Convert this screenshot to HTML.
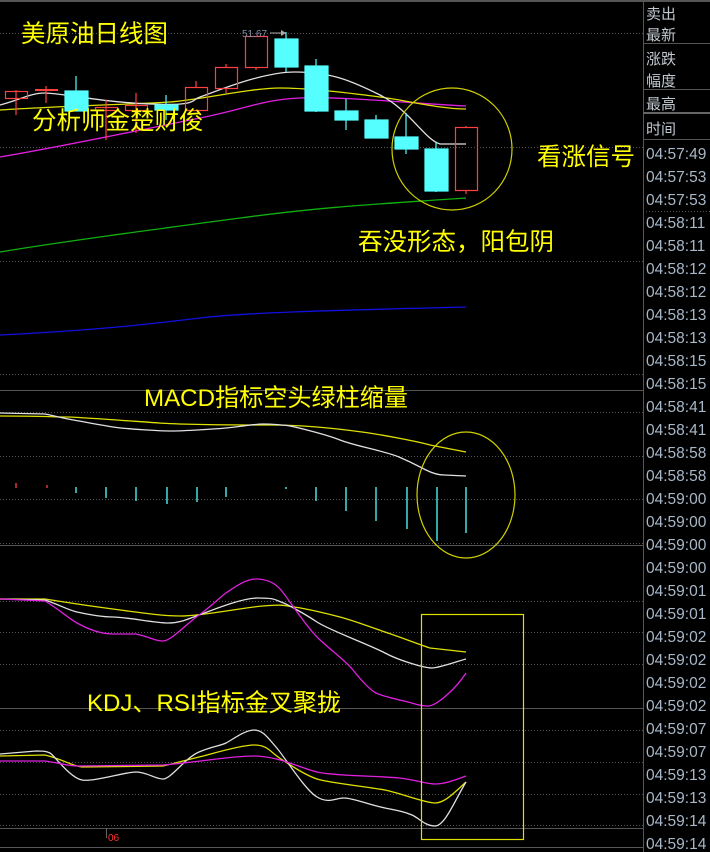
<!DOCTYPE html>
<html><head><meta charset="utf-8"><style>
html,body{margin:0;padding:0;background:#000;width:710px;height:852px;overflow:hidden}
svg{display:block}
.cn{font-family:"Liberation Sans","Noto Sans CJK SC",sans-serif}
</style></head><body>
<svg width="710" height="852" viewBox="0 0 710 852" xmlns="http://www.w3.org/2000/svg">
<rect width="710" height="852" fill="#000"/>
<line x1="0" y1="1" x2="710" y2="1" stroke="#555" stroke-width="2"/>
<g stroke="#555" stroke-width="1" stroke-dasharray="1,2">
<line x1="0" y1="33.5" x2="643" y2="33.5"/>
<line x1="0" y1="147.5" x2="643" y2="147.5"/>
<line x1="0" y1="261.5" x2="643" y2="261.5"/>
<line x1="0" y1="374.5" x2="643" y2="374.5"/>
<line x1="0" y1="412.5" x2="643" y2="412.5"/>
<line x1="0" y1="456.5" x2="643" y2="456.5"/>
<line x1="0" y1="499.5" x2="643" y2="499.5"/>
<line x1="0" y1="543.5" x2="643" y2="543.5"/>
<line x1="0" y1="601.5" x2="643" y2="601.5"/>
<line x1="0" y1="632.5" x2="643" y2="632.5"/>
<line x1="0" y1="664.5" x2="643" y2="664.5"/>
<line x1="0" y1="730.5" x2="643" y2="730.5"/>
<line x1="0" y1="762.5" x2="643" y2="762.5"/>
<line x1="0" y1="794.5" x2="643" y2="794.5"/>
<line x1="0" y1="825.5" x2="643" y2="825.5"/>
<line x1="643" y1="211.5" x2="710" y2="211.5"/>
</g>
<g stroke="#555" stroke-width="1">
<line x1="0" y1="390.5" x2="643" y2="390.5"/>
<line x1="0" y1="545.5" x2="643" y2="545.5"/>
<line x1="0" y1="708.5" x2="643" y2="708.5"/>
<line x1="0" y1="828.5" x2="643" y2="828.5"/>
<line x1="0" y1="847.5" x2="643" y2="847.5"/>
<line x1="643.5" y1="0" x2="643.5" y2="852"/>
<line x1="643" y1="43.5" x2="710" y2="43.5"/>
<line x1="643" y1="89.5" x2="710" y2="89.5"/>
<line x1="643" y1="139.5" x2="710" y2="139.5"/>
</g>
<line x1="643" y1="113" x2="710" y2="113" stroke="#666" stroke-width="2"/>

<g fill="none" stroke-width="1.3">
<path d="M0,335 C100,330 150,324 200,318 S350,310 466,307" stroke="#1010e0"/>
<path d="M0,252 C60,242 150,230 240,218 S380,204 466,198" stroke="#10b010"/>
<path d="M0,157 C60,147 150,128 200,118 S260,100 300,98 S420,104 466,106" stroke="#e020e0"/>
<path d="M0,110 C60,106 140,104 170,102 S250,88 280,88 S350,93 380,97 S440,109 466,109" stroke="#e0e000"/>
<path d="M0,105 C20,100 30,93 45,93 S100,102 150,104 S190,100 200,97 S260,72 295,72 S350,80 380,95 S425,140 440,144 L466,144" stroke="#e0e0e0"/>
</g>

<g stroke="#ff4040" stroke-width="1.2" fill="none">
<line x1="16" y1="90" x2="16" y2="115"/><rect x="5.5" y="91.5" width="22" height="7"/>
<line x1="46" y1="86" x2="46" y2="103"/><line x1="35" y1="90" x2="58" y2="90" stroke-width="2"/>
<line x1="106" y1="100" x2="106" y2="140"/><rect x="95.5" y="107.5" width="22" height="3"/>
<line x1="136" y1="93" x2="136" y2="133"/><rect x="125.5" y="105.5" width="22" height="5"/>
<line x1="196" y1="81" x2="196" y2="87"/><rect x="185.5" y="87.5" width="22" height="23"/>
<line x1="226" y1="64" x2="226" y2="67"/><line x1="226" y1="88" x2="226" y2="93"/><rect x="215.5" y="67.5" width="22" height="21"/>
<line x1="256" y1="67" x2="256" y2="70"/><rect x="245.5" y="36.5" width="22" height="31"/>
<line x1="466" y1="126" x2="466" y2="127"/><line x1="466" y1="190" x2="466" y2="194"/><rect x="455.5" y="127.5" width="22" height="63"/>
</g>
<g stroke="#55ffff" stroke-width="1.2" fill="#55ffff">
<line x1="76" y1="76" x2="76" y2="111"/><rect x="65" y="91" width="23" height="20"/>
<line x1="166" y1="95" x2="166" y2="120"/><rect x="155" y="105" width="23" height="5"/>
<line x1="286" y1="32" x2="286" y2="72"/><rect x="275" y="39" width="23" height="28"/>
<line x1="316" y1="59" x2="316" y2="112"/><rect x="305" y="66" width="23" height="45"/>
<line x1="346" y1="99" x2="346" y2="130"/><rect x="335" y="111" width="23" height="9"/>
<line x1="376" y1="115" x2="376" y2="138"/><rect x="365" y="120" width="23" height="18"/>
<line x1="406" y1="113" x2="406" y2="154"/><rect x="395" y="137" width="23" height="12"/>
<line x1="436" y1="142" x2="436" y2="192"/><rect x="425" y="149" width="23" height="42"/>
</g>
<text x="242" y="37" font-family="Liberation Sans,sans-serif" font-size="10" fill="#8090a8">51.67</text>
<line x1="270" y1="33" x2="282" y2="33" stroke="#aaa" stroke-width="1"/>
<path d="M281,30 L286,33 L281,36Z" fill="#aaa"/>

<ellipse cx="452" cy="149" rx="60" ry="61" fill="none" stroke="#d0d000" stroke-width="1.2"/>

<g fill="none" stroke-width="1.3">
<path d="M0,416 C30,416 60,417 68,417 S130,421 159,423 S240,425 272,425 S340,429 362,432 S420,442 430,445 L466,452" stroke="#e0e000"/>
<path d="M0,413 L45,414 C55,416 62,418 68,419 S100,425 113,427 S160,431 172,431 S215,429 226,428 S255,424 263,424 S285,425 290,426 S325,434 340,440 S385,451 399,457 S418,466 426,470 S440,475 444,475 L466,476" stroke="#e0e0e0"/>
</g>
<g stroke-width="1.3">
<line x1="16" y1="483" x2="16" y2="488" stroke="#ff4040"/>
<line x1="47" y1="485" x2="47" y2="488" stroke="#ff4040"/>
<g stroke="#55ffff">
<line x1="76" y1="487" x2="76" y2="493"/>
<line x1="106" y1="487" x2="106" y2="498"/>
<line x1="136" y1="487" x2="136" y2="501"/>
<line x1="167" y1="487" x2="167" y2="504"/>
<line x1="197" y1="487" x2="197" y2="502"/>
<line x1="226" y1="487" x2="226" y2="497"/>
<line x1="286" y1="487" x2="286" y2="489"/>
<line x1="316" y1="487" x2="316" y2="501"/>
<line x1="346" y1="487" x2="346" y2="511"/>
<line x1="376" y1="487" x2="376" y2="521"/>
<line x1="407" y1="487" x2="407" y2="529"/>
<line x1="437" y1="487" x2="437" y2="541"/>
<line x1="466" y1="487" x2="466" y2="533"/>
</g></g>
<ellipse cx="466" cy="495" rx="49" ry="63" fill="none" stroke="#d0d000" stroke-width="1.2"/>

<g fill="none" stroke-width="1.3">
<path d="M0,599 L45,599 C70,603 90,606 113,609 S160,616 181,616 S240,608 263,606 S285,606 294,607 S325,613 340,617 S370,627 385,632 S415,643 430,648 L466,652" stroke="#e0e000"/>
<path d="M0,599 L45,600 C60,605 68,610 77,612 S100,617 113,617 S155,623 168,623 S190,618 199,615 S240,598 258,598 S275,600 281,602 S305,614 317,622 S370,645 385,653 S425,668 432,668 S455,662 466,659" stroke="#e0e0e0"/>
<path d="M0,599 L45,601 C60,610 68,618 77,623 S100,634 113,634 L136,634 C150,637 155,641 163,641 S185,625 199,615 S220,597 226,593 S245,579 256,579 S275,583 281,590 S305,625 317,637 S345,660 353,670 S370,690 376,693 S400,700 408,702 S420,706 428,706 S455,690 466,673" stroke="#e020e0"/>
<path d="M0,756 L45,755 C65,760 72,766 82,767 L163,766 C180,762 190,759 199,757 S240,745 254,745 S270,752 281,759 S305,775 317,779 S370,787 385,790 S425,803 435,803 S455,792 466,782" stroke="#e0e000"/>
<path d="M0,754 L36,751 C42,751 46,751 50,753 S70,778 82,780 S125,772 136,772 S155,779 163,779 S185,758 199,752 S220,746 226,743 S245,730 254,730 S268,738 276,747 S305,790 317,797 S335,798 344,798 S370,805 385,808 S405,812 412,815 S425,826 435,826 S455,800 466,782" stroke="#e0e0e0"/>
<path d="M0,761 L45,761 C60,763 68,766 77,766 L163,765 C200,762 230,756 254,756 S300,768 317,772 S380,776 399,778 S425,784 435,784 S455,780 466,776" stroke="#e020e0"/>
</g>
<rect x="421.5" y="614.5" width="102" height="225" fill="none" stroke="#e0e000" stroke-width="1.2"/>
<line x1="106.5" y1="828" x2="106.5" y2="838" stroke="#666"/>
<text x="108" y="841" font-family="Liberation Sans,sans-serif" font-size="10" fill="#ff3030">06</text>

<g class="cn" fill="#ffff00" font-size="24.5">
<text x="21" y="42">美原油日线图</text>
<text x="32" y="129">分析师金楚财俊</text>
<text x="537" y="165">看涨信号</text>
<text x="358" y="250">吞没形态，阳包阴</text>
<text x="144" y="406" textLength="264" lengthAdjust="spacingAndGlyphs">MACD指标空头绿柱缩量</text>
<text x="87" y="711" textLength="254" lengthAdjust="spacingAndGlyphs">KDJ、RSI指标金叉聚拢</text>
</g>

<g class="cn" fill="#c0c8d0" font-size="15">
<text x="646" y="19">卖出</text>
<text x="646" y="40">最新</text>
<text x="646" y="64">涨跌</text>
<text x="646" y="86">幅度</text>
<text x="646" y="109">最高</text>
<text x="646" y="134">时间</text>
</g>
<g font-family="Liberation Sans,sans-serif" font-size="15.5" fill="#a8b8c8">
<text x="646" y="159">04:57:49</text>
<text x="646" y="182">04:57:53</text>
<text x="646" y="205">04:57:53</text>
<text x="646" y="228">04:58:11</text>
<text x="646" y="251">04:58:11</text>
<text x="646" y="274">04:58:12</text>
<text x="646" y="297">04:58:12</text>
<text x="646" y="320">04:58:13</text>
<text x="646" y="343">04:58:13</text>
<text x="646" y="366">04:58:15</text>
<text x="646" y="389">04:58:15</text>
<text x="646" y="412">04:58:41</text>
<text x="646" y="435">04:58:41</text>
<text x="646" y="458">04:58:58</text>
<text x="646" y="481">04:58:58</text>
<text x="646" y="504">04:59:00</text>
<text x="646" y="527">04:59:00</text>
<text x="646" y="550">04:59:00</text>
<text x="646" y="573">04:59:00</text>
<text x="646" y="596">04:59:01</text>
<text x="646" y="619">04:59:01</text>
<text x="646" y="642">04:59:02</text>
<text x="646" y="665">04:59:02</text>
<text x="646" y="688">04:59:02</text>
<text x="646" y="711">04:59:02</text>
<text x="646" y="734">04:59:07</text>
<text x="646" y="757">04:59:07</text>
<text x="646" y="780">04:59:13</text>
<text x="646" y="803">04:59:13</text>
<text x="646" y="826">04:59:14</text>
<text x="646" y="849">04:59:14</text>
</g>
</svg>
</body></html>
